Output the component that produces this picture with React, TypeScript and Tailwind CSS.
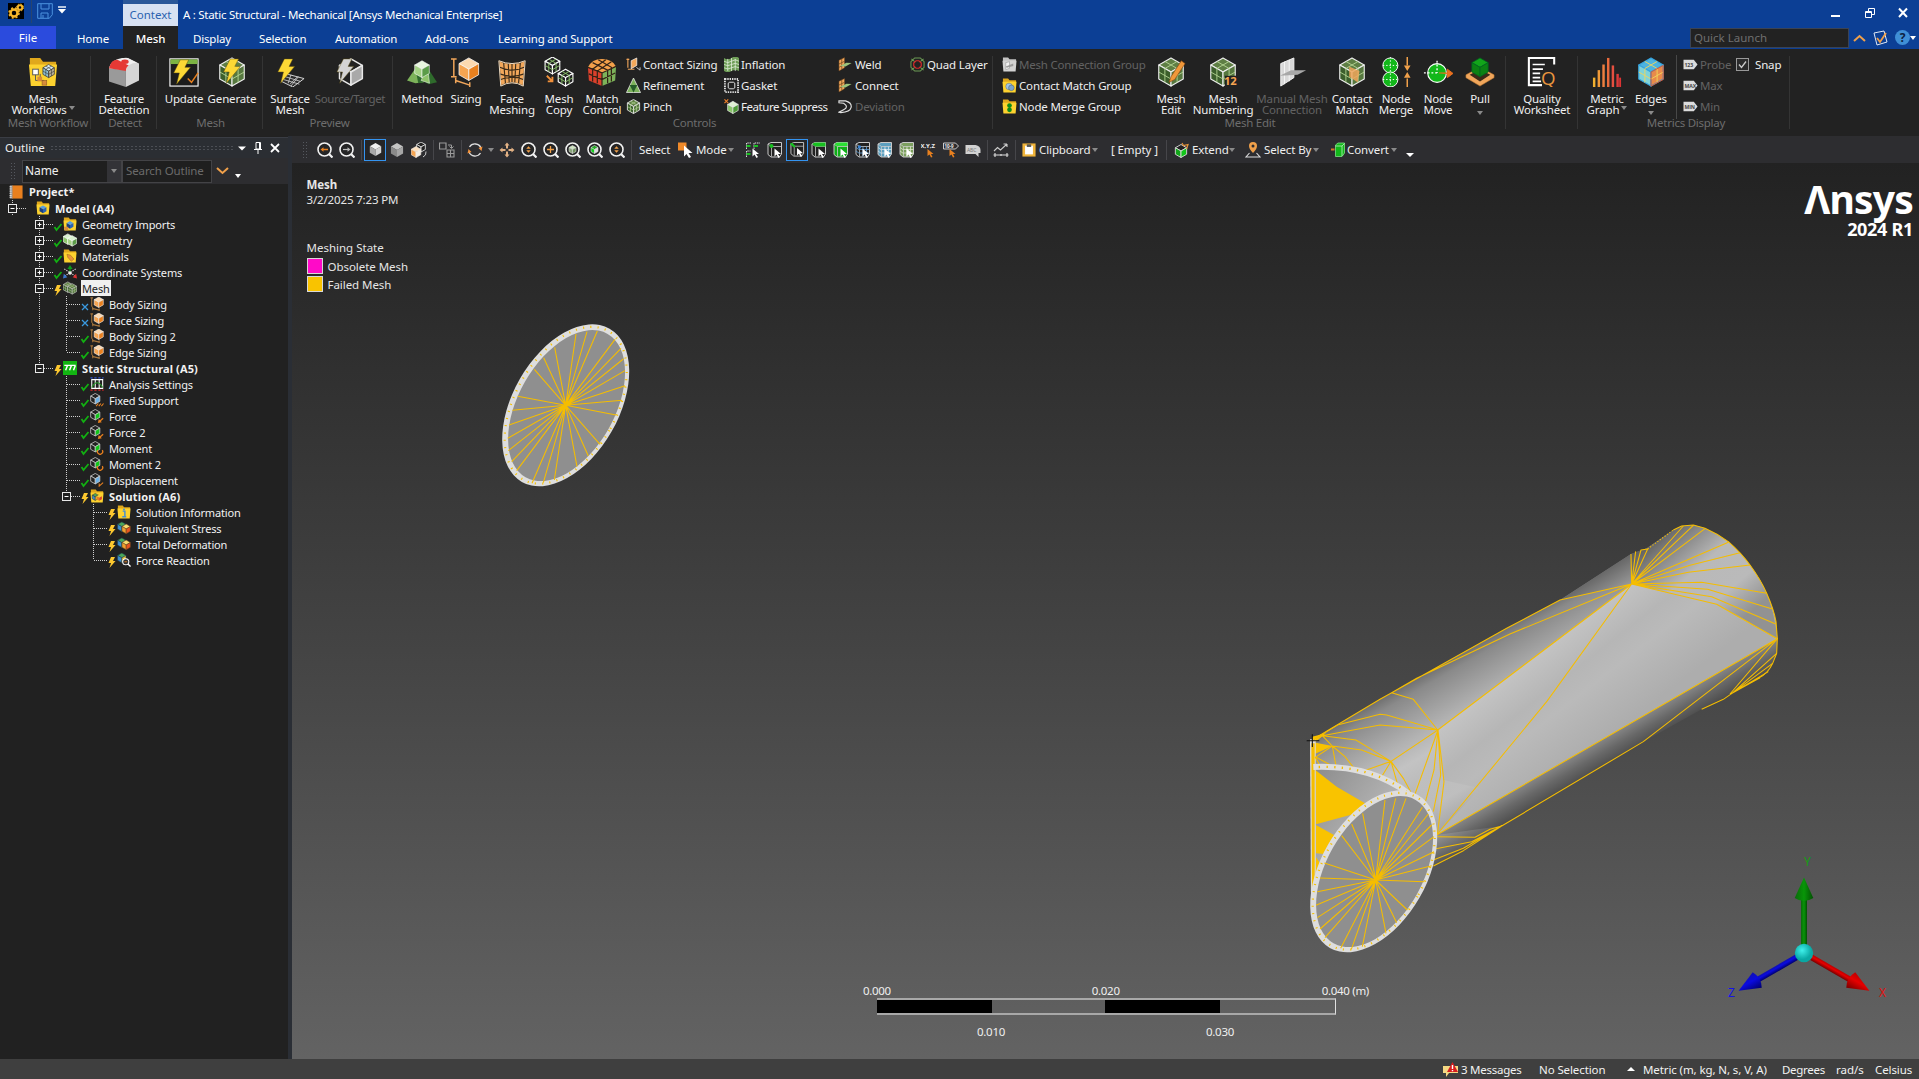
import React from "react";

/* ---------- icon primitives ---------- */

type Faces = [string, string, string];
const WHITE: Faces = ["#f2f2f2", "#cfcfcf", "#a8a8a8"];
const ORANGE: Faces = ["#fcd9b0", "#f6a552", "#e8801f"];
const MESH: Faces = ["#5f7f45", "#3c5f2c", "#56783f"];
const DARK: Faces = ["#222", "#222", "#222"];
const LIME: Faces = ["#222", "#222", "#12c61a"];
const BLUEF: Faces = ["#222", "#222", "#6bb1e6"];

function Cube({ x = 16, y = 16, r = 13, c = WHITE, stroke = "none", sw = 1.2, grid = "" }: { x?: number; y?: number; r?: number; c?: Faces; stroke?: string; sw?: number; grid?: string }) {
  const w = r * 0.87;
  const h = r / 2;
  return (
    <g strokeLinejoin="round">
      <path d={`M${x} ${y - r}l${w} ${h}l${-w} ${h}l${-w} ${-h}z`} fill={c[0]} stroke={stroke} strokeWidth={sw} />
      <path d={`M${x - w} ${y - h}l${w} ${h}v${r}l${-w} ${-h}z`} fill={c[1]} stroke={stroke} strokeWidth={sw} />
      <path d={`M${x + w} ${y - h}l${-w} ${h}v${r}l${w} ${-h}z`} fill={c[2]} stroke={stroke} strokeWidth={sw} />
      {grid && (
        <path
          d={`M${x - w / 2} ${y - h * 1.5}l${w} ${h}v${r}M${x + w / 2} ${y - h * 1.5}l${-w} ${h}v${r}M${x - w} ${y}l${w} ${h}l${w} ${-h}`}
          fill="none" stroke={grid} strokeWidth={sw * 0.8}
        />
      )}
    </g>
  );
}

const BOLT = "M12 2h9l-4 8h6L8 28l3-12H5z";
const Bolt = ({ c = "#fdd835", t = "" }: { c?: string; t?: string }) => <path d={BOLT} fill={c} stroke="#5b4a10" strokeWidth=".5" transform={t} />;

const Svg = ({ s = 30, children }: { s?: number; children: React.ReactNode }) => (
  <svg width={s} height={s} viewBox="0 0 32 32" className="block shrink-0">{children}</svg>
);

const Folder = ({ c = "#fdd22f", d = "#e0a81c" }: { c?: string; d?: string }) => (
  <>
    <path d="M2 1h11l3 4h14v4H2z" fill={d} />
    <path d="M1 8h30l-2 23H3z" fill={c} />
  </>
);

const big: Record<string, React.ReactNode> = {
  workflow: (
    <>
      <Folder />
      <Cube x={22} y={15} r={7} c={["#d9eef5", "#8fc1d4", "#b8b09a"]} stroke="#3a3a3a" grid="#3a3a3a" sw={0.8} />
      <rect x="5" y="13" width="6" height="6" fill="#fff" stroke="#555" />
      <path d="M8 19v6h9M13 22v-4" fill="none" stroke="#555" />
      <rect x="10" y="21" width="5" height="5" fill="#d98c3a" /><rect x="15" y="25" width="5" height="5" fill="#d98c3a" stroke="#8b5a20" strokeWidth=".6" />
    </>
  ),
  feature: (
    <>
      <path d="M0 12Q2 5 9 5L18 11V32L0 26z" fill="#9a9a9a" />
      <path d="M9 5Q14 0 20 1L32 7V25L18 32V14Q15 8 9 5z" fill="#d5d5d5" />
      <path d="M0 12Q2 3 14 1l6 0L30 6Q20 6 18 14z" fill="#efefef" />
      <path d="M0 12Q2 3 9 3l12 6q-3 2-3 6z" fill="#e53935" /><ellipse cx="17" cy="5" rx="4" ry="2.4" fill="#e53935" />
    </>
  ),
  update: (
    <>
      <rect x="1" y="2" width="30" height="29" fill="#1c1c1c" stroke="#fff" strokeWidth="1.2" />
      <rect x="1.500" y="2.500" width="29" height="5" fill="#7cb342" />
      <Bolt t="translate(0 1)" />
      <path d="M20 23l4 4 7-10" stroke="#e8801f" strokeWidth="1.6" fill="none" />
    </>
  ),
  generate: (<><Cube r={15} c={MESH} stroke="#eee" grid="#b5d694" /><Bolt t="translate(2 0)" /></>),
  surface: (
    <>
      <path d="M12 18l19 5-12 9-12-6z" fill="#2c2c2c" stroke="#ddd" />
      <path d="M9 24l17 5M11 21l16 5M17 19l-3 9M24 21l-8 8M17 31l8-10" stroke="#ddd" strokeWidth=".8" fill="none" />
      <Bolt t="translate(-2 0)" />
    </>
  ),
  source: (<><Cube x={17} r={14} c={["#222", "#222", "#a9a9a9"]} stroke="#e8e8e8" sw={1.6} /><Bolt c="#d4d4d4" t="translate(-3 0)" /></>),
  method: (
    <>
      <path d="M9 12l9 15-9 1-9-3z" fill="#7cb25a" /><path d="M9 12l9 15-6 1z" fill="#2f6b2c" />
      <path d="M21 10l11 17-9 2-8-5z" fill="#2f6b2c" /><path d="M22 11l-7 14 9 3z" fill="#8fc46a" stroke="#fff" strokeWidth=".5" />
      <Cube x={16} y={13} r={9} c={["#e8f5df", "#a3d183", "#5b9c48"]} stroke="#fff" sw={0.6} />
    </>
  ),
  sizing: (<><Cube x={19} y={13} r={12} c={ORANGE} stroke="#fff" sw={0.8} /><path d="M3 2v19M0 2h6M0 21h6M5 25l15 5M5 22v6M20 27v5" stroke="#f0a55a" strokeWidth="1.6" fill="none" /></>),
  face: (
    <>
      <path d="M2 4Q16 10 30 4L28 31Q16 24 4 31z" fill="#f3a85b" />
      <path d="M2 4Q16 10 30 4L28 31Q16 24 4 31zM7 5l2 23M12 7l1 20M16 7v20M20 7l-1 20M25 5l-2 23M3 11q13 6 26 0M3 18q13 5 26 0M4 24q12-5 24 0" fill="none" stroke="#3b2b18" strokeWidth="1.200" />
      <path d="M2 4Q16 10 30 4L28 31Q16 24 4 31z" fill="none" stroke="#f6e6d0" strokeWidth="1" />
    </>
  ),
  copy: (<><Cube x={9} y={9} r={9} c={DARK} stroke="#fff" grid="#8cc66b" /><Cube x={23} y={22} r={9} c={DARK} stroke="#fff" grid="#8cc66b" /><path d="M3 20l6 6m0-5v5h-5" stroke="#f0903a" strokeWidth="2" fill="none" /></>),
  match: (
    <>
      <path d="M1 11Q5 2 16 2T31 10L17 17z" fill="#f3a04a" /><path d="M1 11l15 6v14L2 25z" fill="#d9402c" /><path d="M31 10l-15 7v14l14-6z" fill="#7cb25a" />
      <path d="M1 11l15 6 15-7M2 18l14 6 14-7M6 6l16 8v14M12 3l14 8v15M26 5L11 15v13M20 3L6 13v13M16 17v14" fill="none" stroke="#332216" strokeWidth="1.300" />
    </>
  ),
  edit: (<><Cube x={16} y={16} r={15} c={MESH} stroke="#eee" grid="#b5d694" /><path d="M14 27l2-6L27 4l4 3-11 17z" fill="#f0983a" stroke="#8a4a12" strokeWidth=".7" /></>),
  number: (<><Cube x={16} y={16} r={15} c={MESH} stroke="#eee" grid="#b5d694" /><rect x="18" y="20" width="14" height="12" fill="#222" /><text x="17" y="30" fontSize="12" fontWeight="700" fill="#f6a552" fontFamily="Open Sans, sans-serif">12</text></>),
  manual: (<><path d="M4 7l14-6v21L4 31z" fill="#d9d9d9" /><path d="M4 7l14-6v21L4 31zM8 5v24M13 3v23" fill="none" stroke="#f5f5f5" /><path d="M3 20l12-6h16l-9 5z" fill="#a8a8a8" /></>),
  contact: (<><Cube x={16} y={16} r={15} c={MESH} stroke="#eee" grid="#b5d694" /><path d="M13 10l11 5-2 12-9-6z" fill="#f0a65c" opacity=".85" /></>),
  merge: (
    <>
      <circle cx="10" cy="9" r="8" fill="#12b81a" stroke="#fff" strokeWidth="1" /><circle cx="10" cy="24" r="8" fill="#12b81a" stroke="#fff" strokeWidth="1" />
      <path d="M10 0v32M2 9h16M2 24h16" stroke="#fff" strokeDasharray="1.500 2" /><path d="M28 0v9M28 32v-9" stroke="#f0a04a" strokeWidth="1.6" /><path d="M24.500 9h7l-3.500 6zM24.500 22h7l-3.500-6z" fill="#f0a04a" />
    </>
  ),
  move: (<><circle cx="15" cy="17" r="10" fill="#12b81a" stroke="#fff" strokeWidth="1.2" /><path d="M15 4v13M1 17h14" stroke="#fff" strokeWidth="1.4" strokeDasharray="2 2" /><path d="M17 17h9v-4l6 4.500-6 4.500v-4" stroke="#e8701f" fill="#e8701f" strokeWidth="1" /></>),
  pull: (<><path d="M16 11l15 8v3l-15 9-15-9v-3z" fill="#f0a65c" stroke="#b9752f" strokeWidth=".6" /><path d="M5 19l11-6 11 6-11 7z" fill="#3a2a18" /><Cube x={16} y={11} r={10} c={["#12a51a", "#0b8213", "#0b8213"]} stroke="#062" sw={0.8} /></>),
  quality: (<><path d="M29 8V1H2v29h14" fill="none" stroke="#fff" strokeWidth="2.200" /><path d="M6 8h13M6 13h11M6 17.500h8M6 22h8M6 26h9" stroke="#fff" strokeWidth="1.800" /><text x="15" y="30" fontSize="20" fill="#e9963e" fontFamily="Open Sans, sans-serif">Q</text></>),
  metric: (
    <>
      {[[1, 22, "#f0b030"], [6, 14, "#f09a38"], [11, 8, "#ee8040"], [16, 1, "#e96a3c"], [21, 9, "#e45040"], [26, 18, "#dd3a3a"]].map(([x, y, c]) => (
        <rect key={x} x={Number(x)} y={Number(y)} width="2.600" height={32 - Number(y)} fill={String(c)} />
      ))}
      <path d="M30 22v10" stroke="#d33" strokeWidth="2" />
    </>
  ),
  edges: (<><Cube x={16} y={16} r={15} c={["#4db3e0", "#7fd3d9", "#e98a4a"]} stroke="#36a4e0" grid="#f2d65a" /><path d="M16 16l13-7v15l-13 7z" fill="none" stroke="#e2562f" /></>),
};

const TagIcon = ({ t }: { t: string }) => (
  <><path d="M1 6h22l8 10-8 10H1z" fill="#dcdcdc" /><text x="3" y="20.500" fontSize="11" fontWeight="700" fill="#444" fontFamily="Open Sans, sans-serif">{t}</text></>
);

const small: Record<string, React.ReactNode> = {
  csize: (<><path d="M4 3v20M1 5h6M4 26h14" stroke="#f0a55a" strokeWidth="2.4" fill="none" /><path d="M11 8l12-6v16l-12 7z" fill="#f3a85b" stroke="#fff" strokeWidth="1.4" /><path d="M22 22l8 6M30 22v6" stroke="#ccc" strokeWidth="2" /></>),
  refine: (<><path d="M16 0l15 31H1z" fill="#7cb25a" stroke="#eee" strokeWidth="1.6" /><path d="M8 15h16l-8 16z" fill="#245c28" /></>),
  pinch: (<Cube r={15} c={MESH} stroke="#ddd" grid="#a9cf8a" sw={2} />),
  inflate: (<><path d="M0 2q8 6 16 0t16 0v28q-8-5-16 0t-16 0z" fill="#6f9e58" /><path d="M0 9q8 6 16 0t16 0M0 16q8 5 16 0t16 0M0 23q8 5 16 0t16 0M8 4v26M16 2v28M24 4v26" stroke="#e6f0df" strokeWidth="1.6" fill="none" /></>),
  gasket: (<><rect x="2" y="2" width="28" height="28" fill="none" stroke="#ddd" strokeWidth="4" strokeDasharray="3 2" /><path d="M9 11l3-2h8l3 2v10l-3 2h-8l-3-2z" fill="none" stroke="#fff" strokeWidth="1.8" /></>),
  suppress: (<><Cube x={19} y={18} r={13} c={["#dff0d4", "#8cc66b", "#4f9a3a"]} stroke="#eee" sw={1.4} /><path d="M1 1l8 8M9 1l-8 8" stroke="#f0802a" strokeWidth="2.4" /></>),
  weld: (<><path d="M2 7l12-6v22L2 30z" fill="#f3a85b" stroke="#5a3a1a" /><path d="M2 15l12-6M2 22l12-6M8 4v22" stroke="#6b451e" strokeWidth="1.5" /><path d="M4 19l14-7 11 1-13 7z" fill="#9cc47c" /></>),
  deviation: (<path d="M2 4h14q14 4 12 14T6 29l-4-1 10-5q12-6 0-14L2 8z" fill="none" stroke="#e2e2e2" strokeWidth="2.400" />),
  quad: (<><path d="M10 2h12l8 8v12l-8 8H10l-8-8V10zM10 10l-7-6M22 10l7-6M10 22l-7 6M22 22l7 6" fill="none" stroke="#6b9a54" strokeWidth="2.200" /><path d="M13 8h6l5 5v6l-5 5h-6l-5-5v-6z" fill="#222" stroke="#d42a2a" strokeWidth="2.600" /></>),
  gconn: (<><Folder c="#d2d2d2" d="#c4c4c4" /><path d="M8 12l8-2v14l-8 3z" fill="#f2f2f2" stroke="#888" /><path d="M8 20l16-6v5l-14 4z" fill="#9a9a9a" /></>),
  gcontact: (<><Folder /><circle cx="15" cy="18" r="7" fill="#9fc4e6" stroke="#567" /><circle cx="20" cy="21" r="6" fill="#7ba6cf" stroke="#456" /></>),
  gmerge: (<><Folder /><circle cx="16" cy="14" r="5" fill="#0d8a1a" /><circle cx="16" cy="23" r="5" fill="#0d8a1a" /></>),
  probe: <TagIcon t="123" />, max: <TagIcon t="MAX" />, min: <TagIcon t="MIN" />,
  project: (<><rect x="7" y="1" width="24" height="30" fill="#e8801f" /><rect x="2" y="1" width="6" height="30" fill="#999" /><path d="M1 4h5M1 9h5M1 14h5M1 19h5M1 24h5M1 28h5" stroke="#fff" strokeWidth="1.500" /></>),
  fmodel: (<><Folder /><Cube y={19} r={9} c={["#5aa0e0", "#1a3f80", "#2a62b4"]} /></>),
  fgeo: (<><Folder /><Cube y={18} r={9} c={["#5aa0e0", "#1a3f80", "#2a62b4"]} /><path d="M2 22h10v8H5z" fill="#d98c3a" /></>),
  geo: (<><Cube x={11} y={14} r={12} c={["#d9f0cf", "#8cc66b", "#6aa552"]} stroke="#fff" sw={1.4} /><Cube x={21} y={18} r={12} c={["#d9f0cf", "#a3d183", "#5b9c48"]} stroke="#fff" sw={1.4} /></>),
  fmat: (<><Folder /><path d="M9 12l8 2 8 9-6 5-8-9z" fill="#e8943a" stroke="#8a5a1a" /></>),
  coord: (
    <>
      <path d="M3 9l26 17M29 9L3 26" stroke="#ddd" strokeWidth="2.400" strokeDasharray="3 2.500" />
      <path d="M16 18V6" stroke="#0a9a1a" strokeWidth="3" /><path d="M10 9l6-9 6 9z" fill="#0a9a1a" />
      <path d="M0 31l2-11 8 8z" fill="#3a7ad0" /><path d="M32 31l-2-11-8 8z" fill="#d33" /><circle cx="16" cy="18" r="4" fill="#eee" />
    </>
  ),
  mesh: (<><Cube x={11} y={14} r={12} c={MESH} stroke="#ccc" grid="#a9c48e" sw={1.4} /><Cube x={21} y={18} r={12} c={MESH} stroke="#ccc" grid="#a9c48e" sw={1.4} /></>),
  tsize: (<><Cube x={20} y={12} r={12} c={["#fcd9b0", "#f6a552", "#e8801f"]} stroke="#fff" sw={1.2} /><path d="M4 2v20M1 2h6M5 26l16 4M6 22v8M21 26v6" stroke="#a8763c" strokeWidth="2.400" fill="none" /></>),
  static: (<><rect width="32" height="32" fill="#12b512" /><path d="M3 10h26M10 11l-4 10M19 11l-4 10M28 11l-4 10" stroke="#fff" strokeWidth="3.4" /></>),
  analysis: (<><path d="M4 6h25v20H4zM12 6v20M21 6v20" fill="none" stroke="#fff" strokeWidth="2.400" /><path d="M4 24q12-22 25 0" fill="none" stroke="#2a9a2a" strokeWidth="2.400" /><path d="M1 2h30" stroke="#2d55d8" strokeWidth="3" strokeDasharray="5 4" /><path d="M1 30h30" stroke="#d22" strokeWidth="3" strokeDasharray="5 4" /></>),
  support: (<><Cube x={12} y={13} r={12} c={BLUEF} stroke="#ccc" sw={1.8} /><path d="M14 30l5-6M20 30l5-6M26 30l5-6" stroke="#e8801f" strokeWidth="2.400" /></>),
  force: (<><Cube x={12} y={13} r={12} c={LIME} stroke="#ccc" sw={1.8} /><path d="M30 21l-9 8" stroke="#e8801f" strokeWidth="3" /><path d="M18 32l2-9 7 7z" fill="#e8801f" /></>),
  moment: (<><Cube x={12} y={13} r={12} c={LIME} stroke="#ccc" sw={1.8} /><path d="M18 21a6 6 0 1 0 10 0" fill="none" stroke="#e8801f" strokeWidth="3" /></>),
  disp: (<><Cube x={12} y={13} r={12} c={BLUEF} stroke="#ccc" sw={1.8} /><path d="M30 22l-9 8v-6" stroke="#e8801f" strokeWidth="2.4" fill="none" /></>),
  fsol: (<><Folder /><Cube x={12} y={18} r={8} c={["#4aa85a", "#3d8fd0", "#e8c23a"]} stroke="#333" /><Cube x={21} y={20} r={7} c={["#f4d03f", "#e8801f", "#d9402c"]} /></>),
  finfo: (<><Folder /><path d="M13 14h5v12M12 27h9" stroke="#4a8fd0" strokeWidth="3.400" fill="none" /><circle cx="16" cy="10" r="2.200" fill="#4a8fd0" /></>),
  result: (<><Cube x={11} y={13} r={11} c={["#4aa85a", "#3d8fd0", "#8ac24a"]} stroke="#245" /><Cube x={21} y={18} r={11} c={["#f7dc6f", "#f0a030", "#e8561f"]} stroke="#642" /></>),
  reaction: (<><Cube x={11} y={11} r={11} c={["#4aa85a", "#3d8fd0", "#e8c23a"]} stroke="#245" /><circle cx="20" cy="20" r="7" fill="#333" stroke="#fff" strokeWidth="2.400" /><path d="M25 25l6 6" stroke="#fff" strokeWidth="3" /><path d="M17 20h6" stroke="#e8801f" strokeWidth="2" /></>),
};

const Mag = ({ children }: { children: React.ReactNode }) => (
  <><circle cx="15" cy="15" r="13" fill="#252526" stroke="#f2f2f2" strokeWidth="3.200" /><path d="M24 24l7 7" stroke="#f2f2f2" strokeWidth="4.500" />{children}</>
);
const Pointer = ({ c = "#fff" }: { c?: string }) => <path d="M15 13v16l4-4 4 7 3-2-4-6h6z" fill={c} />;
const Sel = ({ children, c = DARK, g = "" }: { children?: React.ReactNode; c?: Faces; g?: string }) => (
  <>
    <path d="M2 4l6-3h21v23l-4 6H8l-6-5z" fill={c[1]} stroke="#c9c9c9" strokeWidth="2" />
    <path d="M2 4l7 5h20M9 9v20" stroke="#c9c9c9" strokeWidth="1.600" fill="none" />
    {g && <path d="M9 15h20M9 22h20M2 11l7 5M2 18l7 5M16 9v20M23 9v20" stroke={g} strokeWidth="1.600" fill="none" />}
    {children}
    <Pointer />
  </>
);

const tool: Record<string, React.ReactNode> = {
  z1: <Mag><path d="M10 15h12" stroke="#e8801f" strokeWidth="3" /><path d="M7 15l6-4.500v9z" fill="#e8801f" /></Mag>,
  z2: <Mag><path d="M8 15h12" stroke="#bbb" strokeWidth="2.400" /><path d="M23 15l-6-4.500v9z" fill="#bbb" /></Mag>,
  z3: <Mag><path d="M10.500 13.500l4.500-5 4.500 5zM10.500 16.500l4.500 5 4.500-5z" fill="#f0a04a" /></Mag>,
  z4: <Mag><path d="M15 8v14M8 15h14" stroke="#f0a04a" strokeWidth="2.600" /></Mag>,
  z5: <Mag><Cube x={15} y={15} r={8} c={["#cfe6c0", "#8aa67a", "#6c8f5a"]} stroke="#ddd" /></Mag>,
  z6: <Mag><Cube x={15} y={15} r={8} c={["#2a2", "#12d01a", "#ddd"]} stroke="#ddd" /></Mag>,
  shaded: <Cube r={14} c={["#efefef", "#a8a8a8", "#d2d2d2"]} />,
  gray: <Cube r={14} c={["#c4c4c4", "#8a8a8a", "#a6a6a6"]} />,
  wire: (<><Cube x={20} y={10} r={10} c={DARK} stroke="#ddd" sw={1.8} /><Cube x={10} y={20} r={11} c={["#fce0c0", "#f6a552", "#f3ede4"]} stroke="#f3ede4" /><path d="M24 30q7-3 6-11" stroke="#ccc" fill="none" strokeWidth="2" /></>),
  swap: (<><path d="M1 2h13v12H1z" fill="none" stroke="#9a9a9a" strokeWidth="2.400" /><path d="M18 6h7v6m-4-3l4 4 4-4" stroke="#9a9a9a" strokeWidth="2" fill="none" /><path d="M16 16h14v14H16zM16 23h14M23 16v14" fill="none" stroke="#9a9a9a" strokeWidth="2.200" /></>),
  rotate: (<><path d="M5 10a13 13 0 0 1 23 2M27 22a13 13 0 0 1-23-2" fill="none" stroke="#ddd" strokeWidth="2.600" /><path d="M31 9l-2 9-6-6zM1 23l2-9 6 6z" fill="#f0903a" /></>),
  pan: (<path d="M16 1l5 6h-3v6h-4V7h-3zM16 31l5-6h-3v-6h-4v6h-3zM1 16l6-5v3h6v4H7v3zM31 16l-6-5v3h-6v4h6v3z" fill="#e2b184" />),
  mode: (<><rect x="0" y="1" width="17" height="16" fill="#f08a2a" /><path d="M12 7v22l5-5 5 8 4-2-5-8h8z" fill="#fff" /></>),
  s1: (<><path d="M3 14V2h10M18 14V2h12M3 30V18h8" stroke="#ddd" strokeWidth="2" fill="none" strokeDasharray="3 1.500" /><path d="M3 8h8M18 8h8M3 24h8" stroke="#18c020" strokeWidth="4" /><Pointer /></>),
  s2: <Sel><circle cx="9" cy="8" r="4" fill="#18c020" /></Sel>,
  s3: <Sel><path d="M1 2h4l7 7-3 3-8-6z" fill="#18c020" /></Sel>,
  s4: <Sel><path d="M2 4l6-3h21v8H9z" fill="#18c020" /></Sel>,
  s5: <Sel c={["#1c1", "#0fae18", "#1c1"]}><path d="M3 4l6-3h20v7H9z" fill="#2be034" /></Sel>,
  s6: <Sel g="#5fa0d8"><circle cx="9" cy="10" r="3.500" fill="#3a86d8" /></Sel>,
  s7: <Sel c={["#abc", "#5c9fbf", "#abc"]} g="#cfe6f0" />,
  s8: <Sel c={["#abc", "#7c9f5f", "#abc"]} g="#dbe8c8" />,
  s9: (<><text x="-1" y="11" fontSize="12" fontWeight="700" fill="#eee" fontFamily="Open Sans, sans-serif">X,Y,Z</text><path d="M13 14v14l4-3 3 6 3-1-3-6h5z" fill="#e8801f" /></>),
  s10: (<><path d="M1 2h24l6 6-6 6H1z" fill="none" stroke="#ddd" strokeWidth="1.800" /><text x="3" y="11" fontSize="9" fontWeight="700" fill="#eee" fontFamily="Open Sans, sans-serif">10-9</text><path d="M13 14v14l4-3 3 6 3-1-3-6h5z" fill="#e8801f" /></>),
  s11: (<><path d="M1 6h20q10 2 10 10v6h-4v8l-6-6H1z" fill="#d2d2d2" /><text x="4" y="20" fontSize="10" fill="#777" fontFamily="Open Sans, sans-serif">ABC</text></>),
  chart: (<><path d="M2 18l7-7 6 5L28 4M28 4v6M28 4h-7" fill="none" stroke="#ccc" strokeWidth="2.200" /><path d="M1 26h30M4 22v8M28 22v8M16 24v4" stroke="#ddd" strokeWidth="2.200" /></>),
  clip: (<><rect x="1" y="1" width="30" height="30" fill="#f0b43a" /><path d="M7 6h18v20H7z" fill="#fff" /><path d="M11 3h10v6H11z" fill="#555" /></>),
  extend: (<><Cube x={14} y={18} r={13} c={["#222", "#12a61a", "#12c61a"]} stroke="#ddd" sw={1.8} /><path d="M16 2l3 5 9-2-3 9" fill="none" stroke="#e8943a" strokeWidth="2.400" /></>),
  selby: (<><path d="M16 0a8 8 0 0 1 8 8q0 6-8 14Q8 14 8 8a8 8 0 0 1 8-8z" fill="#f0a04a" /><circle cx="16" cy="8" r="3" fill="#2d2d30" /><path d="M9 22l-7 8h28l-7-8" fill="none" stroke="#ddd" strokeWidth="2.200" /></>),
  convert: (<><path d="M0 15h7" stroke="#d9782a" strokeWidth="4" /><path d="M9 6l5-4h13v20l-5 7H9z" fill="#12b81a" stroke="#7fe085" strokeWidth="1.600" /><path d="M9 8h13v20M22 8l5-5" fill="none" stroke="#bdf0c0" strokeWidth="1.600" /></>),
};

/* ---------- ribbon ---------- */

const Caret = ({ cls = "" }: { cls?: string }) => (
  <span className={"inline-block h-0 w-0 shrink-0 border-x-[3.5px] border-t-[4px] border-x-transparent border-t-[#8a8a8a] " + cls} />
);

function Big({ icon, l1, l2, w, off, arrow, below }: { icon: string; l1: string; l2?: string; w: string; off?: boolean; arrow?: boolean; below?: boolean }) {
  return (
    <div className={"flex shrink-0 flex-col items-center text-center whitespace-nowrap " + w + (off ? " text-[#626262]" : " text-[#efefef]")}>
      <Svg>{big[icon]}</Svg>
      <span className="mt-[6px] h-[11px] leading-[11px]">{l1}</span>
      {l2 && (
        <span className="flex h-[11px] items-center leading-[11px]">
          {l2}{arrow && <Caret cls="ml-[2px] -mt-1" />}
        </span>
      )}
      {below && <Caret cls="mt-[7px]" />}
    </div>
  );
}

const Small = ({ icon, t, off, cls = "" }: { icon: string; t: string; off?: boolean; cls?: string }) => (
  <div className={"flex h-[21px] items-center gap-[2px] whitespace-nowrap " + (off ? "text-[#626262] " : "text-[#efefef] ") + cls}>
    <Svg s={15}>{small[icon]}</Svg>{t}
  </div>
);

const Group = ({ w, label, pad = "", children }: { w: string; label: string; pad?: string; children: React.ReactNode }) => (
  <div className={"flex h-[73px] shrink-0 flex-col border-r border-[#343434] " + w}>
    <div className="flex h-[61px] items-start pt-[1px]">{children}</div>
    <div className={"h-[12px] text-center leading-[12px] tracking-[-0.25px] whitespace-nowrap text-[#6d6d6d] " + pad}>{label}</div>
  </div>
);

const Ribbon = () => (
  <div className="flex h-[87px] bg-[#222222] pt-[7px] text-[11.5px] tracking-[-0.15px]">
    <Group w="w-[91px]" label="Mesh Workflow" pad="pl-[6px] tracking-[-0.5px]">
      <Big icon="workflow" l1="Mesh" l2="Workflows" w="w-[86px]" arrow />
    </Group>
    <Group w="w-[66px]" label="Detect" pad="pl-[3px]">
      <Big icon="feature" l1="Feature" l2="Detection" w="w-[66px]" />
    </Group>
    <Group w="w-[106px]" label="Mesh" pad="pl-[2px]">
      <Big icon="update" l1="Update" w="ml-[3px] w-[48px]" />
      <Big icon="generate" l1="Generate" w="w-[48px]" />
    </Group>
    <Group w="w-[130px]" label="Preview" pad="pl-[4px]">
      <Big icon="surface" l1="Surface" l2="Mesh" w="ml-[3px] w-[48px]" />
      <Big icon="source" l1="Source/Target" w="w-[72px] tracking-[-0.4px]" off />
    </Group>
    <Group w="w-[600px]" label="Controls" pad="pl-[4px]">
      <Big icon="method" l1="Method" w="ml-[6px] w-[46px]" />
      <Big icon="sizing" l1="Sizing" w="w-[42px]" />
      <Big icon="face" l1="Face" l2="Meshing" w="w-[50px]" />
      <Big icon="copy" l1="Mesh" l2="Copy" w="w-[44px]" />
      <Big icon="match" l1="Match" l2="Control" w="w-[42px]" />
      <div className="ml-[3px] w-[98px] -mt-[3px]"><Small icon="csize" t="Contact Sizing" /><Small icon="refine" t="Refinement" /><Small icon="pinch" t="Pinch" /></div>
      <div className="w-[114px] -mt-[3px]"><Small icon="inflate" t="Inflation" /><Small icon="gasket" t="Gasket" /><Small icon="suppress" t="Feature Suppress" cls="tracking-[-0.45px]" /></div>
      <div className="w-[72px] -mt-[3px]"><Small icon="weld" t="Weld" /><Small icon="weld" t="Connect" /><Small icon="deviation" t="Deviation" off /></div>
      <div className="-mt-[3px]"><Small icon="quad" t="Quad Layer" /></div>
    </Group>
    <Group w="w-[513px]" label="Mesh Edit" pad="pl-[2px]">
      <div className="ml-[9px] w-[147px] -mt-[3px]"><Small icon="gconn" t="Mesh Connection Group" off cls="tracking-[-0.22px]" /><Small icon="gcontact" t="Contact Match Group" /><Small icon="gmerge" t="Node Merge Group" /></div>
      <Big icon="edit" l1="Mesh" l2="Edit" w="w-[44px]" />
      <Big icon="number" l1="Mesh" l2="Numbering" w="w-[60px]" />
      <Big icon="manual" l1="Manual Mesh" l2="Connection" w="w-[78px]" off />
      <Big icon="contact" l1="Contact" l2="Match" w="w-[42px]" />
      <Big icon="merge" l1="Node" l2="Merge" w="ml-[2px] w-[42px]" />
      <Big icon="move" l1="Node" l2="Move" w="w-[42px]" />
      <Big icon="pull" l1="Pull" w="w-[42px]" below />
    </Group>
    <Group w="w-[72px]" label=""><Big icon="quality" l1="Quality" l2="Worksheet" w="w-[72px]" /></Group>
    <Group w="w-[212px]" label="Metrics Display" pad="pl-[5px]">
      <Big icon="metric" l1="Metric" l2="Graph" w="ml-[7px] w-[44px]" arrow />
      <Big icon="edges" l1="Edges" w="w-[44px]" below />
      <div className="-mt-[2px] ml-[3px] h-[64px] w-px shrink-0 bg-[#484848]" />
      <div className="ml-[6px] w-[54px] -mt-[3px]"><Small icon="probe" t="Probe" off /><Small icon="max" t="Max" off /><Small icon="min" t="Min" off /></div>
      <div className="flex h-[21px] -mt-[3px] items-center gap-[6px] text-[#efefef]">
        <svg width="13" height="13" className="-mt-px -ml-px block"><rect x=".5" y=".5" width="12" height="12" fill="#2b2b2b" stroke="#999" /><path d="M3 6.500l2.500 3L10 3.500" fill="none" stroke="#ccc" strokeWidth="1.300" /></svg>
        Snap
      </div>
    </Group>
  </div>
);

/* ---------- title bar ---------- */

const TitleBar = () => (
  <div className="flex h-[49px] bg-[#0c3f95] text-[11.5px] text-white">
    <div className="flex w-[123px] shrink-0 flex-col">
      <div className="flex h-[26px] items-start">
        <svg width="16" height="16" viewBox="0 0 32 32" className="mt-[3px] ml-[8px] bg-black">
          <circle cx="12" cy="20" r="7" fill="none" stroke="#f5b52a" strokeWidth="5" /><circle cx="12" cy="20" r="10" fill="none" stroke="#f5b52a" strokeWidth="3" strokeDasharray="4 4" />
          <circle cx="24" cy="9" r="4.500" fill="none" stroke="#f5b52a" strokeWidth="4" /><circle cx="24" cy="9" r="7" fill="none" stroke="#f5b52a" strokeWidth="2" strokeDasharray="3 2.500" />
        </svg>
        <div className="ml-[7px] h-[23px] w-px bg-[#27446f]" />
        <svg width="16" height="16" viewBox="0 0 16 16" className="mt-[3px] ml-[5px]" fill="none" stroke="#4c93df"><path d="M.7.700h14.600v11l-3 3.600H.700zM4 1v5h8V1M4 15v-5h7v5M6 12v3" /></svg>
        <svg width="8" height="8" className="mt-[6px] ml-[5px]"><path d="M0 1h8" stroke="#fff" strokeWidth="1.4" /><path d="M0 3h8L4 7.500z" fill="#fff" /></svg>
      </div>
      <div className="flex h-[23px]">
        <div className="flex w-[56px] items-center justify-center bg-[#2b4bdd] pt-px">File</div>
        <div className="flex flex-1 items-center pt-[2px] pl-[21px] tracking-[-0.2px]">Home</div>
      </div>
    </div>
    <div className="flex w-[55px] shrink-0 flex-col text-center">
      <div className="h-[4px] bg-[#2a5799]" />
      <div className="h-[22px] bg-[#d7e1f2] leading-[22px] text-[#2a62b0]">Context</div>
      <div className="h-[23px] bg-[#222222] leading-[26px] font-medium tracking-[-0.1px]">Mesh</div>
    </div>
    <div className="flex flex-1 flex-col">
      <div className="flex h-[26px] items-start justify-between">
        <span className="pl-[5px] leading-[30px] tracking-[-0.28px] whitespace-nowrap">A : Static Structural - Mechanical [Ansys Mechanical Enterprise]</span>
        <div className="flex h-[26px] items-center gap-[25px] pr-[11px]">
          <svg width="9" height="12"><path d="M0 9h9" stroke="#fff" strokeWidth="2" /></svg>
          <svg width="10" height="12" fill="none" stroke="#fff"><path d="M.5 4.500h6v6h-6zM.5 5.500h6M3.500 4V1.500h6v6H7" /></svg>
          <svg width="10" height="12" className="-ml-[2px]"><path d="M1 1.500l8 8.500M9 1.500L1 10" stroke="#fff" strokeWidth="2" /></svg>
        </div>
      </div>
      <div className="flex h-[23px] items-center tracking-[-0.18px]">
        <span className="ml-[15px] w-[66px] pt-[2px]">Display</span>
        <span className="w-[76px] pt-[2px]">Selection</span>
        <span className="w-[90px] pt-[2px]">Automation</span>
        <span className="w-[73px] pt-[2px]">Add-ons</span>
        <span className="flex-1 pt-[2px]">Learning and Support</span>
        <div className="flex h-[20px] w-[159px] items-center border border-[#3a4354] bg-[#222222] pl-[3px] tracking-normal text-[#6f6f6f]">Quick Launch</div>
        <svg width="13" height="8" className="ml-[4px]"><path d="M1 7l5.500-5L12 7" fill="none" stroke="#f0a04a" strokeWidth="2" /></svg>
        <svg width="15" height="16" className="ml-[7px]" fill="none"><path d="M1 3l10-2 3 11-10 3z" stroke="#dfe8f5" /><path d="M4 8l3 4 6-9" stroke="#f0a04a" strokeWidth="1.800" /></svg>
        <div className="ml-[7px] flex h-[15px] w-[15px] items-center justify-center rounded-full bg-[#3f8fd6] text-[12px] font-bold text-[#0d2240]">?</div>
        <Caret cls="mr-[3px] border-x-[2.5px] border-t-white" />
      </div>
    </div>
  </div>
);

/* ---------- outline ---------- */

type Row = { p: string; s?: "ok" | "bolt" | "x"; i: string; t: string; b?: boolean; sel?: boolean };
const rows: Row[] = [
  { p: "-", i: "fmodel", t: "Model (A4)", b: true },
  { p: " +", s: "ok", i: "fgeo", t: "Geometry Imports" },
  { p: " +", s: "ok", i: "geo", t: "Geometry" },
  { p: " +", s: "ok", i: "fmat", t: "Materials" },
  { p: " +", s: "ok", i: "coord", t: "Coordinate Systems" },
  { p: " -", s: "bolt", i: "mesh", t: "Mesh", sel: true },
  { p: " |t", s: "x", i: "tsize", t: "Body Sizing" },
  { p: " |t", s: "x", i: "tsize", t: "Face Sizing" },
  { p: " |t", s: "ok", i: "tsize", t: "Body Sizing 2" },
  { p: " |l", s: "ok", i: "tsize", t: "Edge Sizing" },
  { p: " e", s: "bolt", i: "static", t: "Static Structural (A5)", b: true },
  { p: "  t", s: "ok", i: "analysis", t: "Analysis Settings" },
  { p: "  t", s: "ok", i: "support", t: "Fixed Support" },
  { p: "  t", s: "ok", i: "force", t: "Force" },
  { p: "  t", s: "ok", i: "force", t: "Force 2" },
  { p: "  t", s: "ok", i: "moment", t: "Moment" },
  { p: "  t", s: "ok", i: "moment", t: "Moment 2" },
  { p: "  t", s: "ok", i: "disp", t: "Displacement" },
  { p: "  e", s: "bolt", i: "fsol", t: "Solution (A6)", b: true },
  { p: "   t", s: "bolt", i: "finfo", t: "Solution Information" },
  { p: "   t", s: "bolt", i: "result", t: "Equivalent Stress" },
  { p: "   t", s: "bolt", i: "result", t: "Total Deformation" },
  { p: "   l", s: "bolt", i: "reaction", t: "Force Reaction" },
];

/** One 27px column of the tree: guide line, branch or expander box. */
function Guide({ k }: { k: string }) {
  const box = k === "+" || k === "-" || k === "e";
  return (
    <svg width="27" height="16" className="block shrink-0" fill="none" stroke="#d0d0d0">
      {k !== " " && <path d={k === "l" || k === "e" ? "M13.5 0V8" : "M13.5 0V16"} strokeDasharray="1 1" />}
      {k !== " " && k !== "|" && <path d="M14 8.500H27" strokeDasharray="1 1" />}
      {box && <rect x="9.500" y="4.500" width="8" height="8" fill="#212121" stroke="#e8e8e8" />}
      {box && <path d={k === "+" ? "M11.500 8.500h4M13.500 6.500v4" : "M11.500 8.500h4"} stroke="#fff" />}
    </svg>
  );
}

const Status = ({ s }: { s?: string }) => (
  <svg width="10" height="16" className="block shrink-0">
    {s === "ok" && <path d="M1.500 11l2 3L8.500 8" fill="none" stroke="#12b012" strokeWidth="1.800" />}
    {s === "x" && <path d="M2 8l6 6M8 8l-6 6" stroke="#3a9ae0" strokeWidth="1.300" />}
    {s === "bolt" && <path d="M4 5h4L6 9h2.500L2.500 16 4 11H1.500z" fill="#fdc82f" />}
  </svg>
);

const Outline = () => (
  <aside className="flex w-[292px] shrink-0 flex-col border-r-4 border-[#2a2e35] bg-[#212121]">
    <div className="mt-px flex h-[21px] shrink-0 items-center border-t border-[#3a3d44] bg-[#2b2e33] pl-[5px] text-[11.5px] text-[#efefef]">
      Outline
      <div className="mr-[5px] ml-[5px] h-[6px] flex-1 bg-[radial-gradient(#4b4e54_0.7px,transparent_0.8px)] bg-[size:4px_3px]" />
      <svg width="8" height="5" className="mr-[8px]"><path d="M0 .5h8L4 4.500z" fill="#fff" /></svg>
      <svg width="8" height="12" className="mr-[8px]" fill="none" stroke="#fff"><path d="M2 .5h4.500V7H2zM5.500 1v6M0 7.500h8M4 8v4" /></svg>
      <svg width="10" height="10" className="mr-[8px]"><path d="M1 1l8 8M9 1L1 9" stroke="#fff" strokeWidth="1.800" /></svg>
    </div>
    <div className="flex h-[26px] shrink-0 items-center bg-[#2d2d30] text-[12px]">
      <div className="ml-[10px] h-[18px] w-[6px] bg-[radial-gradient(#55585e_0.7px,transparent_0.8px)] bg-[size:3px_3px]" />
      <div className="ml-[6px] flex h-[23px] w-[100px] items-center justify-between border border-[#434346] bg-[#1f1f1f] pl-[2px] tracking-[-0.1px] text-[#efefef]">
        Name
        <div className="flex h-full w-[14px] items-center justify-center bg-[#333337]"><Caret /></div>
      </div>
      <div className="flex h-[23px] w-[90px] items-center border border-[#434346] bg-[#1f1f1f] pl-[3px] text-[11.5px] tracking-[-0.1px] whitespace-nowrap text-[#6b6b6b]">Search Outline</div>
      <svg width="13" height="8" className="ml-[4px]"><path d="M1 1l5.500 5L12 1" fill="none" stroke="#f0a04a" strokeWidth="2" /></svg>
      <Caret cls="mt-[9px] ml-[6px] border-t-white" />
    </div>
    <div className="flex flex-col text-[11px] text-[#f2f2f2]">
      <div className="flex h-[16px] items-center gap-[6px] pl-[9px] font-bold tracking-[0.1px]"><Svg s={14}>{small.project}</Svg><span className="leading-[18px]">Project*</span></div>
      {rows.map((r) => (
        <div key={r.t} className="flex h-[16px] items-center whitespace-nowrap">
          <span className="-ml-px flex">{r.p.split("").map((k, n) => <Guide key={n} k={k} />)}</span>
          <Status s={r.s} />
          <Svg s={14}>{small[r.i]}</Svg>
          <span className={"ml-[4px] h-[16px] px-[1px] leading-[17.5px] " + (r.b ? "font-bold tracking-[0.12px] " : "tracking-[-0.15px] ") + (r.sel ? "bg-[#f0f0f0] text-[#222]" : "")}>{r.t}</span>
        </div>
      ))}
    </div>
  </aside>
);

/* ---------- graphics toolbar ---------- */

const T = ({ i, m = "ml-[6px]" }: { i: string; m?: string }) => <span className={"shrink-0 " + m}><Svg s={16}>{tool[i]}</Svg></span>;
const Boxed = ({ i, m }: { i: string; m: string }) => (
  <span className={"flex h-[22px] w-[22px] shrink-0 items-center justify-center border border-[#3494f0] bg-[#252526] " + m}><Svg s={15}>{tool[i]}</Svg></span>
);
const Sep = ({ m }: { m: string }) => <span className={"h-[20px] w-px shrink-0 bg-[#46464a] " + m} />;

const Toolbar = () => (
  <div className="flex h-[27px] shrink-0 items-center bg-[#2d2d30] text-[11.5px] tracking-[-0.1px] whitespace-nowrap text-[#efefef]">
    <div className="ml-[10px] h-[18px] w-[6px] shrink-0 bg-[radial-gradient(#55585e_0.7px,transparent_0.8px)] bg-[size:3px_3px]" />
    <T i="z1" m="ml-[9px]" /><T i="z2" />
    <Sep m="ml-[6px]" /><Boxed i="shaded" m="ml-[2px]" /><T i="gray" m="ml-[3px]" /><T i="wire" />
    <Sep m="ml-[6px]" /><T i="swap" m="ml-[5px]" />
    <Sep m="ml-[6px]" /><T i="rotate" m="ml-[5px]" /><Caret cls="ml-[5px]" /><T i="pan" m="ml-[5px]" />
    <T i="z3" /><T i="z4" /><T i="z5" /><T i="z6" /><T i="z3" />
    <Sep m="ml-[6px]" /><span className="ml-[7px] w-[39px]">Select</span><T i="mode" m="" /><span className="ml-[2px] w-[32px]">Mode</span><Caret />
    <T i="s1" m="ml-[11px]" /><T i="s2" /><Boxed i="s3" m="ml-[3px]" /><T i="s4" m="ml-[3px]" />
    <T i="s5" /><T i="s6" /><T i="s7" /><T i="s8" /><T i="s9" /><T i="s10" /><T i="s11" />
    <Sep m="ml-[6px]" /><T i="chart" m="ml-[5px]" /><Sep m="ml-[6px]" />
    <span className="ml-[6px]"><Svg s={14}>{tool.clip}</Svg></span><span className="ml-[3px] w-[53px]">Clipboard</span><Caret />
    <span className="ml-[13px] w-[55px]">[ Empty ]</span>
    <Sep m="" /><T i="extend" m="ml-[7px]" /><span className="ml-[2px] w-[37px]">Extend</span><Caret />
    <T i="selby" m="ml-[10px]" /><span className="ml-[3px] w-[49px]">Select By</span><Caret />
    <T i="convert" m="ml-[12px]" /><span className="w-[43px]">Convert</span><Caret cls="ml-[1px]" />
    <Caret cls="mt-[10px] ml-[9px] border-x-[4px] border-t-white" />
  </div>
);

/* ---------- 3D scene ---------- */

type Pt = [number, number];
const HUB_A: Pt = [827, 826];
const SPOKES_A: Pt[] = [[858, 612], [891, 605], [922, 603], [975, 628], [993, 655], [1000, 687], [1005, 722], [1005, 767], [996, 811], [978, 855], [930, 943], [895, 978], [861, 1010], [793, 1050], [760, 1058], [726, 1060], [680, 1022], [665, 995], [655, 962], [653, 925], [657, 885], [667, 841], [683, 799], [733, 718], [761, 683], [794, 652]];
const HUB_B: Pt = [257, 480];
const SPOKES_B: Pt[] = [[285, 240], [317, 235], [348, 235], [397, 262], [415, 282], [425, 315], [432, 350], [432, 395], [425, 437], [403, 485], [352, 570], [320, 608], [288, 640], [217, 680], [184, 688], [152, 685], [105, 653], [90, 627], [82, 593], [78, 556], [82, 515], [90, 474], [103, 429], [155, 347], [185, 312], [218, 280]];
const rays = (h: Pt, pts: Pt[]) => pts.map(([x, y]) => `M${h[0]} ${h[1]}L${x} ${y}`).join("");

const Disc = ({ x, y }: { x: number; y: number }) => (
  <g transform={`translate(${x} ${y}) rotate(29.8)`}>
    <ellipse rx="52.900" ry="88.300" fill="#dedede" />
    <ellipse cx=".9" cy="-.2" rx="48" ry="82.600" fill="#8f8f8f" />
    <ellipse rx="50.400" ry="85.600" fill="none" stroke="#f5c000" strokeWidth="2.200" strokeDasharray="1.100 6.200" />
  </g>
);

const BODY = "M-204 690L0 568L35 548L380 355L540 270L753 132L800 115L880 60L905 48L940 45L975 55Q1010 70 1045 95Q1083 128 1110 165Q1143 210 1160 250Q1182 300 1188 335L1192 386L1190 430L1178 460Q1165 490 1135 505L1060 548L965 598L790 695L365 948L160 1068L-10 1100L-195 1110z";

const Scene = () => (
  <svg width="1627" height="896" viewBox="292 163 1627 896" className="absolute inset-0">
    <defs>
      <linearGradient id="cyl" gradientUnits="userSpaceOnUse" x1="245" y1="424" x2="500" y2="866">
        <stop offset="0" stopColor="#6e6e6e" /><stop offset=".07" stopColor="#8a8a8a" /><stop offset=".16" stopColor="#9a9a9a" /><stop offset=".3" stopColor="#b2b2b2" /><stop offset=".42" stopColor="#c3c3c3" />
        <stop offset=".6" stopColor="#b8b8b8" /><stop offset=".78" stopColor="#acacac" /><stop offset=".86" stopColor="#868686" /><stop offset=".93" stopColor="#686868" /><stop offset="1" stopColor="#505050" />
      </linearGradient>
      <linearGradient id="facet" gradientUnits="userSpaceOnUse" x1="440" y1="440" x2="650" y2="710">
        <stop offset="0" stopColor="#c5c5c5" /><stop offset=".35" stopColor="#b6b6b6" /><stop offset=".55" stopColor="#bababa" /><stop offset="1" stopColor="#adadad" />
      </linearGradient>
      <linearGradient id="cap" gradientUnits="userSpaceOnUse" x1="820" y1="70" x2="1060" y2="350">
        <stop offset="0" stopColor="#585858" /><stop offset=".2" stopColor="#868686" /><stop offset=".45" stopColor="#b9b9b9" /><stop offset=".75" stopColor="#bababa" /><stop offset="1" stopColor="#929292" />
      </linearGradient>
      <linearGradient id="flap" gradientUnits="userSpaceOnUse" x1="650" y1="180" x2="700" y2="260">
        <stop offset="0" stopColor="#5e5e5e" /><stop offset="1" stopColor="#9c9c9c" />
      </linearGradient>
      <linearGradient id="inner" x1="0" y1="0" x2="1" y2="1"><stop offset="0" stopColor="#8c8c8c" /><stop offset=".5" stopColor="#b0b0b0" /><stop offset="1" stopColor="#c0c0c0" /></linearGradient>
      <linearGradient id="neck" gradientUnits="userSpaceOnUse" x1="170" y1="880" x2="250" y2="1030"><stop offset="0" stopColor="#c0c0c0" /><stop offset=".45" stopColor="#a2a2a2" /><stop offset="1" stopColor="#555" /></linearGradient>
      <radialGradient id="ball" cx=".4" cy=".35"><stop offset="0" stopColor="#3ff0ea" /><stop offset="1" stopColor="#0aa8a4" /></radialGradient>
      <linearGradient id="gy" x1="0" x2="1" y1="0" y2="0"><stop offset="0" stopColor="#0a6a0a" /><stop offset=".5" stopColor="#089608" /><stop offset="1" stopColor="#045004" /></linearGradient>
      <linearGradient id="gx" x1="0" x2="0" y1="0" y2="1"><stop offset="0" stopColor="#b00" /><stop offset=".4" stopColor="#e60000" /><stop offset="1" stopColor="#700" /></linearGradient>
      <linearGradient id="gz" x1="0" x2="0" y1="0" y2="1"><stop offset="0" stopColor="#1010b0" /><stop offset=".4" stopColor="#0a0ae0" /><stop offset="1" stopColor="#00006a" /></linearGradient>
    </defs>

    <Disc x={565.700} y={405.300} />
    <g transform="translate(290 130) scale(.33333)" stroke="#f5bd00" strokeWidth="3.200" fill="none"><path d={rays(HUB_A, SPOKES_A)} /></g>

    {/* cylinder body */}
    <g transform="translate(1380 510) scale(.33333)">
      <path d={BODY} fill="url(#cyl)" />
      <path d="M540 270L753 132L755 222z" fill="url(#flap)" />
      <path d="M755 222L753 132L800 115L880 60L905 48L940 45L975 55Q1010 70 1045 95Q1083 128 1110 165Q1143 210 1160 250Q1182 300 1192 386L1010 283z" fill="url(#cap)" />
      <path d="M755 222L1010 283L1192 386L170 975L180 800L173 660z" fill="url(#facet)" />
      <path d="M173 660L190 810L300 835L170 975L365 948L160 1068L100 850z" fill="url(#neck)" opacity=".75" />
      <g stroke="#f5bd00" strokeWidth="3.200" fill="none" strokeLinejoin="round">
        <path d="M-204 690L0 568L35 548L380 355L540 270L755 222L390 372L110 505L35 548L100 568L173 660L755 222L500 575L170 975L1192 386L790 695L365 948" />
        <path d="M755 222L753 132M755 222L767 124M755 222L783 120L803 117L755 222M755 222L910 48M755 222L940 46M755 222L975 56M755 222L1045 97M755 222L930 166L1080 128M755 222L925 187L1110 165M755 222L965 217L1160 250M755 222L983 238L1177 297M755 222L995 260L1187 342M755 222L1010 283L1192 386" />
        <path d="M803 117L880 60" strokeDasharray="4 5" />
        <path d="M880 60L905 48L940 45L975 55Q1010 70 1045 95Q1083 128 1110 165Q1143 210 1160 250Q1182 300 1188 335L1192 386L1190 430L1178 460Q1165 490 1135 505" />
        <path d="M1192 386L1050 552M1190 430L1056 550L1178 460M1165 485L1056 550L1140 503M1056 550L1030 568L965 598" />
        <path d="M365 948L330 958L285 982L172 980M365 948L275 995L160 1018M365 948L250 1015L160 1050M365 948L250 1022L160 1068" />
      </g>
    </g>

    {/* near end */}
    <g transform="translate(1290 720) scale(.33333)">
      <path d="M76 145Q230 140 350 215L300 380L76 500z" fill="url(#inner)" />
      <path d="M76 150L140 200L225 250L200 280L78 313zM78 315L132 345L102 402L78 400zM78 412L92 432L76 500zM66 66L127 78L74 102zM66 50L108 40L66 74z" fill="#f9c300" />
      <path d="M60 58h17v470l-14 30z" fill="#dedede" /><path d="M64 70h10v420l-8 30z" fill="#f5bd00" />
      <g stroke="#f5bd00" strokeWidth="3.200" fill="none">
        <path d="M66 62L97 47L270 15L444 30L303 124L215 90L127 78L97 47L198 60L303 124M66 62L145 14L270 -17L290 -15L444 30M303 124L272 175M303 124L322 190M303 124L340 175L362 215M303 124L210 157M127 78L76 112L90 137M76 110L125 137M127 78L138 138M127 78L165 110L195 148" />
        <path d="M444 30L375 222M444 30L432 150L405 250M444 30L452 165L430 275M444 30L462 185L442 345" />
      </g>
      <path d="M70 141Q240 134 355 220" fill="none" stroke="#dedede" strokeWidth="18" />
      <path d="M86 141Q240 136 350 216" fill="none" stroke="#f5bd00" strokeWidth="7" strokeDasharray="4 19" />
    </g>
    <Disc x={1373.700} y={871.300} />
    <g transform="translate(1290 720) scale(.33333)" stroke="#f5bd00" strokeWidth="3.200" fill="none">
      <path d={rays(HUB_B, SPOKES_B)} />
      <path d="M50 62h38M67 43v38" stroke="#111" />
    </g>

    {/* orientation triad */}
    <rect x="1801" y="898" width="6" height="52" fill="url(#gy)" />
    <path d="M1804 877.500L1813.300 898Q1804 904 1794.700 898z" fill="url(#gy)" />
    <g transform="translate(1804 953) rotate(30)"><rect x="4" y="-3" width="50" height="6" fill="url(#gx)" /><path d="M75.500 0L54 -9Q49 0 54 9z" fill="url(#gx)" /></g>
    <g transform="translate(1804 953) rotate(150) scale(1 -1)"><rect x="4" y="-3" width="50" height="6" fill="url(#gz)" /><path d="M75.500 0L54 -9Q49 0 54 9z" fill="url(#gz)" /></g>
    <circle cx="1804" cy="953" r="9.200" fill="url(#ball)" />
    <g fontFamily="Noto Sans, sans-serif" fontSize="12" textAnchor="middle">
      <text x="1807.500" y="865.500" fill="#12a012">Y</text><text x="1882.500" y="997" fill="#e01010">X</text><text x="1731.500" y="997" fill="#1414e6">Z</text>
    </g>
  </svg>
);

const Scale = () => (
  <div className="absolute top-[821px] left-[557px] w-[520px] text-[11.5px] leading-[14px] tracking-[-0.3px] text-[#efefef]">
    <div className="flex"><span className="w-[56px] text-center">0.000</span><span className="ml-[173px] w-[56px] text-center">0.020</span><span className="ml-[188px] whitespace-nowrap">0.040 (m)</span></div>
    <div className="ml-[28px] flex h-[17px] w-[459px] border-y-2 border-r border-[#a8a8a8] border-r-[#e0e0e0]">
      <div className="w-[115px] bg-black" /><div className="w-[113px]" /><div className="w-[115px] bg-black" />
    </div>
    <div className="mt-[10px] flex"><span className="ml-[114px] w-[56px] text-center">0.010</span><span className="ml-[173px] w-[56px] text-center">0.030</span></div>
  </div>
);

const Viewport = () => (
  <main className="relative flex-1 overflow-hidden bg-gradient-to-b from-[#222222] to-[#636363]">
    <Scene />
    <div className="absolute top-[14px] left-[14.5px] text-[11.5px] leading-[15px] text-[#e6e6e6]">
      <div className="font-bold tracking-[-0.1px]">Mesh</div>
      <div className="tracking-[-0.15px]">3/2/2025 7:23 PM</div>
      <div className="mt-[33px]">Meshing State</div>
      <div className="mt-[2px] flex h-[18px] items-center gap-[5px] tracking-[-0.05px]"><span className="h-[16px] w-[16px] border border-[#d8d8d8] bg-[#ff0ac8]" />Obsolete Mesh</div>
      <div className="flex h-[18px] items-center gap-[5px] tracking-[-0.05px]"><span className="h-[16px] w-[16px] border border-[#d8d8d8] bg-[#f9c300]" />Failed Mesh</div>
    </div>
    <div className="absolute top-[11px] right-[6px] flex flex-col items-end font-bold text-white">
      <div className="text-[39px] leading-[50px] tracking-[-0.8px]">Λnsys</div>
      <div className="-mt-[6px] text-[18px] leading-[22px] tracking-[-0.3px]">2024 R1</div>
    </div>
    <Scale />
  </main>
);

const StatusBar = () => (
  <footer className="flex h-[20px] items-center bg-[#3f3f3f] pt-[2px] text-[11.5px] whitespace-nowrap text-[#f2f2f2]">
    <svg width="16" height="15" viewBox="0 0 16 15" className="ml-[1443px] shrink-0 -mt-[2px]"><path d="M0 4h15v7H6l-3 4v-4H0z" fill="#f5d983" /><path d="M9.500 0l5.500 10H4z" fill="#d81e1e" /><path d="M9.500 3v4M9.500 8v1.200" stroke="#fff" strokeWidth="1.400" /></svg>
    <span className="ml-[2px] w-[78px] tracking-[-0.25px]">3 Messages</span>
    <span className="w-[88px] tracking-[-0.1px]">No Selection</span>
    <span className="-mt-[3px] h-0 w-0 border-x-[4px] border-b-[4px] border-x-transparent border-b-white" />
    <span className="ml-[8px] w-[139px] tracking-[-0.1px]">Metric (m, kg, N, s, V, A)</span>
    <span className="w-[54px] tracking-[-0.3px]">Degrees</span>
    <span className="w-[39px]">rad/s</span>
    <span className="tracking-[-0.1px]">Celsius</span>
  </footer>
);

export default function App() {
  return (
    <div className="flex h-[1079px] w-[1919px] flex-col overflow-hidden bg-[#222222] [font-family:'Noto_Sans','Open_Sans',sans-serif]">
      <TitleBar />
      <Ribbon />
      <div className="flex min-h-0 flex-1">
        <Outline />
        <div className="flex min-w-0 flex-1 flex-col">
          <Toolbar />
          <Viewport />
        </div>
      </div>
      <StatusBar />
    </div>
  );
}
